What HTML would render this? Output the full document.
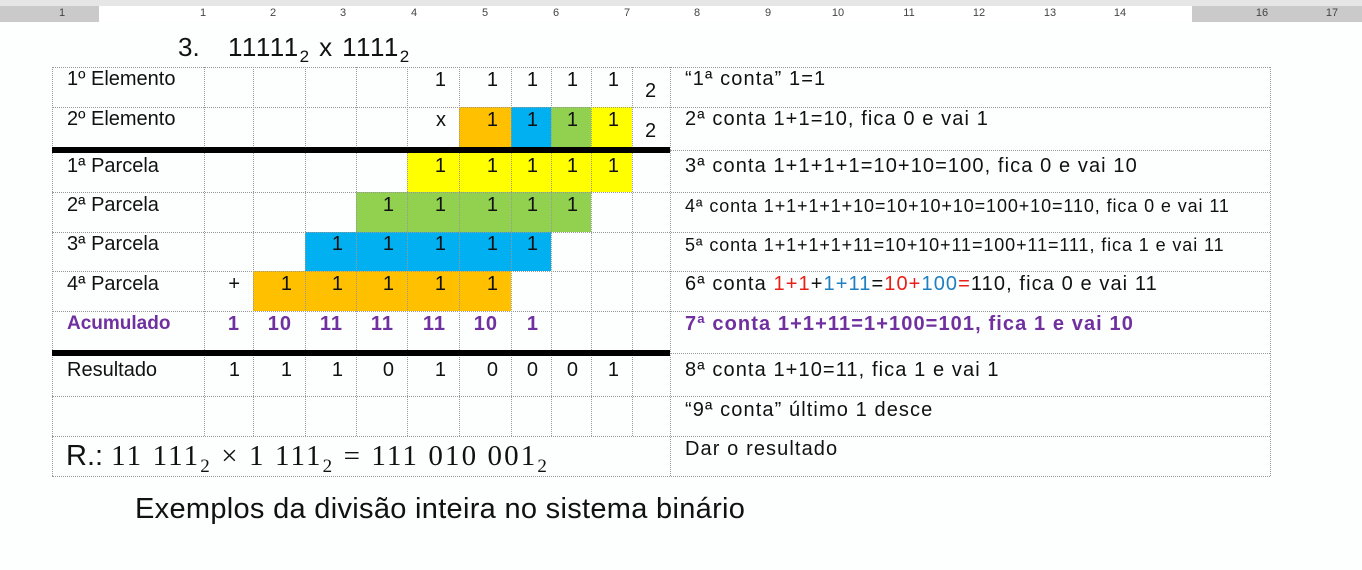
<!DOCTYPE html>
<html><head><meta charset="utf-8"><style>
*{margin:0;padding:0;box-sizing:border-box}
body{width:1362px;height:570px;overflow:hidden;background:#fdfefe;font-family:"Liberation Sans",Arial,sans-serif;position:relative;color:#111}
.a{position:absolute}
.ruler{left:0;top:6px;width:1362px;height:16px;background:#cacaca}
.rw{left:99px;top:6px;width:1093px;height:16px;background:#fff}
.rn{position:absolute;top:7px;font-size:11px;color:#444;width:20px;text-align:center;margin-left:-10px}
.vl{position:absolute;width:0;border-left:1px dotted #999}
.hl{position:absolute;height:0;border-top:1px dotted #999}
.f{position:absolute}
.t{position:absolute;font-size:20px;line-height:22px;white-space:nowrap}
.r{letter-spacing:1.1px}
.n{position:absolute;font-size:20px;line-height:22px;text-align:right;padding-right:13px}
.p{color:#7030a0;font-weight:bold}
.bar{position:absolute;left:52px;width:618px;height:6px;background:#000}
</style></head><body>
<div class="a" style="left:0;top:0;width:1362px;height:6px;background:#e6e6e6"></div>
<div class="a ruler"></div><div class="a rw"></div>
<div class="rn" style="left:62px">1</div>
<div class="rn" style="left:203px">1</div><div class="rn" style="left:273px">2</div><div class="rn" style="left:343px">3</div><div class="rn" style="left:414px">4</div><div class="rn" style="left:485px">5</div><div class="rn" style="left:556px">6</div><div class="rn" style="left:627px">7</div><div class="rn" style="left:697px">8</div><div class="rn" style="left:768px">9</div><div class="rn" style="left:838px">10</div><div class="rn" style="left:909px">11</div><div class="rn" style="left:979px">12</div><div class="rn" style="left:1050px">13</div><div class="rn" style="left:1120px">14</div><div class="rn" style="left:1262px">16</div><div class="rn" style="left:1332px">17</div>

<div class="t" style="left:178px;top:32px;font-size:26px;line-height:30px">3.</div>
<div class="t" style="left:228px;top:32px;font-size:26px;line-height:30px;letter-spacing:1.4px">11111<sub style="font-size:17px">2</sub> x 1111<sub style="font-size:17px">2</sub></div>

<!-- fills -->
<div class="f" style="left:459px;top:107px;width:52px;height:40px;background:#ffc000"></div>
<div class="f" style="left:511px;top:107px;width:40px;height:40px;background:#00b0f0"></div>
<div class="f" style="left:551px;top:107px;width:40px;height:40px;background:#92d050"></div>
<div class="f" style="left:591px;top:107px;width:41px;height:40px;background:#ffff00"></div>
<div class="f" style="left:407px;top:153px;width:225px;height:39px;background:#ffff00"></div>
<div class="f" style="left:356px;top:192px;width:235px;height:40px;background:#92d050"></div>
<div class="f" style="left:305px;top:232px;width:246px;height:39px;background:#00b0f0"></div>
<div class="f" style="left:253px;top:271px;width:258px;height:40px;background:#ffc000"></div>

<!-- grid vertical -->
<div class="vl" style="left:52px;top:67px;height:409px"></div>
<div class="vl" style="left:204px;top:67px;height:369px"></div>
<div class="vl" style="left:253px;top:67px;height:369px"></div>
<div class="vl" style="left:305px;top:67px;height:369px"></div>
<div class="vl" style="left:356px;top:67px;height:369px"></div>
<div class="vl" style="left:407px;top:67px;height:369px"></div>
<div class="vl" style="left:459px;top:67px;height:369px"></div>
<div class="vl" style="left:511px;top:67px;height:369px"></div>
<div class="vl" style="left:551px;top:67px;height:369px"></div>
<div class="vl" style="left:591px;top:67px;height:369px"></div>
<div class="vl" style="left:632px;top:67px;height:369px"></div>
<div class="vl" style="left:670px;top:67px;height:409px"></div>
<div class="vl" style="left:1270px;top:67px;height:409px"></div>
<!-- grid horizontal -->
<div class="hl" style="left:52px;top:67px;width:1218px"></div>
<div class="hl" style="left:52px;top:107px;width:1218px"></div>
<div class="hl" style="left:670px;top:150px;width:600px"></div>
<div class="hl" style="left:52px;top:192px;width:1218px"></div>
<div class="hl" style="left:52px;top:232px;width:1218px"></div>
<div class="hl" style="left:52px;top:271px;width:1218px"></div>
<div class="hl" style="left:52px;top:311px;width:1218px"></div>
<div class="hl" style="left:670px;top:353px;width:600px"></div>
<div class="hl" style="left:52px;top:396px;width:1218px"></div>
<div class="hl" style="left:52px;top:436px;width:1218px"></div>
<div class="hl" style="left:52px;top:476px;width:1218px"></div>
<div class="bar" style="top:147px"></div>
<div class="bar" style="top:350px"></div>

<!-- labels -->
<div class="t" style="left:67px;top:68px">1º Elemento</div>
<div class="t" style="left:67px;top:108px">2º Elemento</div>
<div class="t" style="left:67px;top:155px">1ª Parcela</div>
<div class="t" style="left:67px;top:194px">2ª Parcela</div>
<div class="t" style="left:67px;top:233px">3ª Parcela</div>
<div class="t" style="left:67px;top:273px">4ª Parcela</div>
<div class="t p" style="left:67px;top:313px;font-size:19px">Acumulado</div>
<div class="t" style="left:67px;top:359px">Resultado</div>

<!-- row1 -->
<div class="n" style="left:407px;width:52px;top:69px">1</div>
<div class="n" style="left:459px;width:52px;top:69px">1</div>
<div class="n" style="left:511px;width:40px;top:69px">1</div>
<div class="n" style="left:551px;width:40px;top:69px">1</div>
<div class="n" style="left:591px;width:41px;top:69px">1</div>
<div class="t" style="left:645px;top:80px">2</div>
<!-- row2 -->
<div class="n" style="left:407px;width:52px;top:109px">x</div>
<div class="n" style="left:459px;width:52px;top:109px">1</div>
<div class="n" style="left:511px;width:40px;top:109px">1</div>
<div class="n" style="left:551px;width:40px;top:109px">1</div>
<div class="n" style="left:591px;width:41px;top:109px">1</div>
<div class="t" style="left:645px;top:120px">2</div>
<!-- row3 -->
<div class="n" style="left:407px;width:52px;top:155px">1</div>
<div class="n" style="left:459px;width:52px;top:155px">1</div>
<div class="n" style="left:511px;width:40px;top:155px">1</div>
<div class="n" style="left:551px;width:40px;top:155px">1</div>
<div class="n" style="left:591px;width:41px;top:155px">1</div>
<!-- row4 -->
<div class="n" style="left:356px;width:51px;top:194px">1</div>
<div class="n" style="left:407px;width:52px;top:194px">1</div>
<div class="n" style="left:459px;width:52px;top:194px">1</div>
<div class="n" style="left:511px;width:40px;top:194px">1</div>
<div class="n" style="left:551px;width:40px;top:194px">1</div>
<!-- row5 -->
<div class="n" style="left:305px;width:51px;top:233px">1</div>
<div class="n" style="left:356px;width:51px;top:233px">1</div>
<div class="n" style="left:407px;width:52px;top:233px">1</div>
<div class="n" style="left:459px;width:52px;top:233px">1</div>
<div class="n" style="left:511px;width:40px;top:233px">1</div>
<!-- row6 -->
<div class="n" style="left:204px;width:49px;top:273px">+</div>
<div class="n" style="left:253px;width:52px;top:273px">1</div>
<div class="n" style="left:305px;width:51px;top:273px">1</div>
<div class="n" style="left:356px;width:51px;top:273px">1</div>
<div class="n" style="left:407px;width:52px;top:273px">1</div>
<div class="n" style="left:459px;width:52px;top:273px">1</div>
<!-- row7 -->
<div class="n p" style="left:204px;width:49px;top:313px;letter-spacing:1px">1</div>
<div class="n p" style="left:253px;width:52px;top:313px;letter-spacing:1px">10</div>
<div class="n p" style="left:305px;width:51px;top:313px;letter-spacing:1px">11</div>
<div class="n p" style="left:356px;width:51px;top:313px;letter-spacing:1px">11</div>
<div class="n p" style="left:407px;width:52px;top:313px;letter-spacing:1px">11</div>
<div class="n p" style="left:459px;width:52px;top:313px;letter-spacing:1px">10</div>
<div class="n p" style="left:511px;width:40px;top:313px">1</div>
<!-- row8 -->
<div class="n" style="left:204px;width:49px;top:359px">1</div>
<div class="n" style="left:253px;width:52px;top:359px">1</div>
<div class="n" style="left:305px;width:51px;top:359px">1</div>
<div class="n" style="left:356px;width:51px;top:359px">0</div>
<div class="n" style="left:407px;width:52px;top:359px">1</div>
<div class="n" style="left:459px;width:52px;top:359px">0</div>
<div class="n" style="left:511px;width:40px;top:359px">0</div>
<div class="n" style="left:551px;width:40px;top:359px">0</div>
<div class="n" style="left:591px;width:41px;top:359px">1</div>

<div class="t" style="left:66px;top:439px;font-size:29px;line-height:34px">R.: <span style="font-family:'Liberation Serif',serif;letter-spacing:2.1px">11 111<sub style="font-size:19px">2</sub> × 1 111<sub style="font-size:19px">2</sub> = 111 010 001<sub style="font-size:19px">2</sub></span></div>

<!-- right column -->
<div class="t r" style="left:685px;top:68px">“1ª conta” 1=1</div>
<div class="t r" style="left:685px;top:108px">2ª conta 1+1=10, fica 0 e vai 1</div>
<div class="t r" style="left:685px;top:155px">3ª conta 1+1+1+1=10+10=100, fica 0 e vai 10</div>
<div class="t" style="left:685px;top:195px;font-size:18px;letter-spacing:0.9px">4ª conta 1+1+1+1+10=10+10+10=100+10=110, fica 0 e vai 11</div>
<div class="t" style="left:685px;top:234px;font-size:18px;letter-spacing:0.9px">5ª conta 1+1+1+1+11=10+10+11=100+11=111, fica 1 e vai 11</div>
<div class="t r" style="left:685px;top:273px">6ª conta <span style="color:#e8201a">1+1</span>+<span style="color:#1f7fc0">1+11</span>=<span style="color:#e8201a">10+</span><span style="color:#1f7fc0">100</span><span style="color:#e8201a">=</span>110, fica 0 e vai 11</div>
<div class="t p r" style="left:685px;top:313px">7ª conta 1+1+11=1+100=101, fica 1 e vai 10</div>
<div class="t r" style="left:685px;top:359px">8ª conta 1+10=11, fica 1 e vai 1</div>
<div class="t r" style="left:685px;top:399px">“9ª conta” último 1 desce</div>
<div class="t r" style="left:685px;top:438px">Dar o resultado</div>

<div class="t" style="left:135px;top:493px;font-size:29px;line-height:32px;letter-spacing:0.3px">Exemplos da divisão inteira no sistema binário</div>
</body></html>
